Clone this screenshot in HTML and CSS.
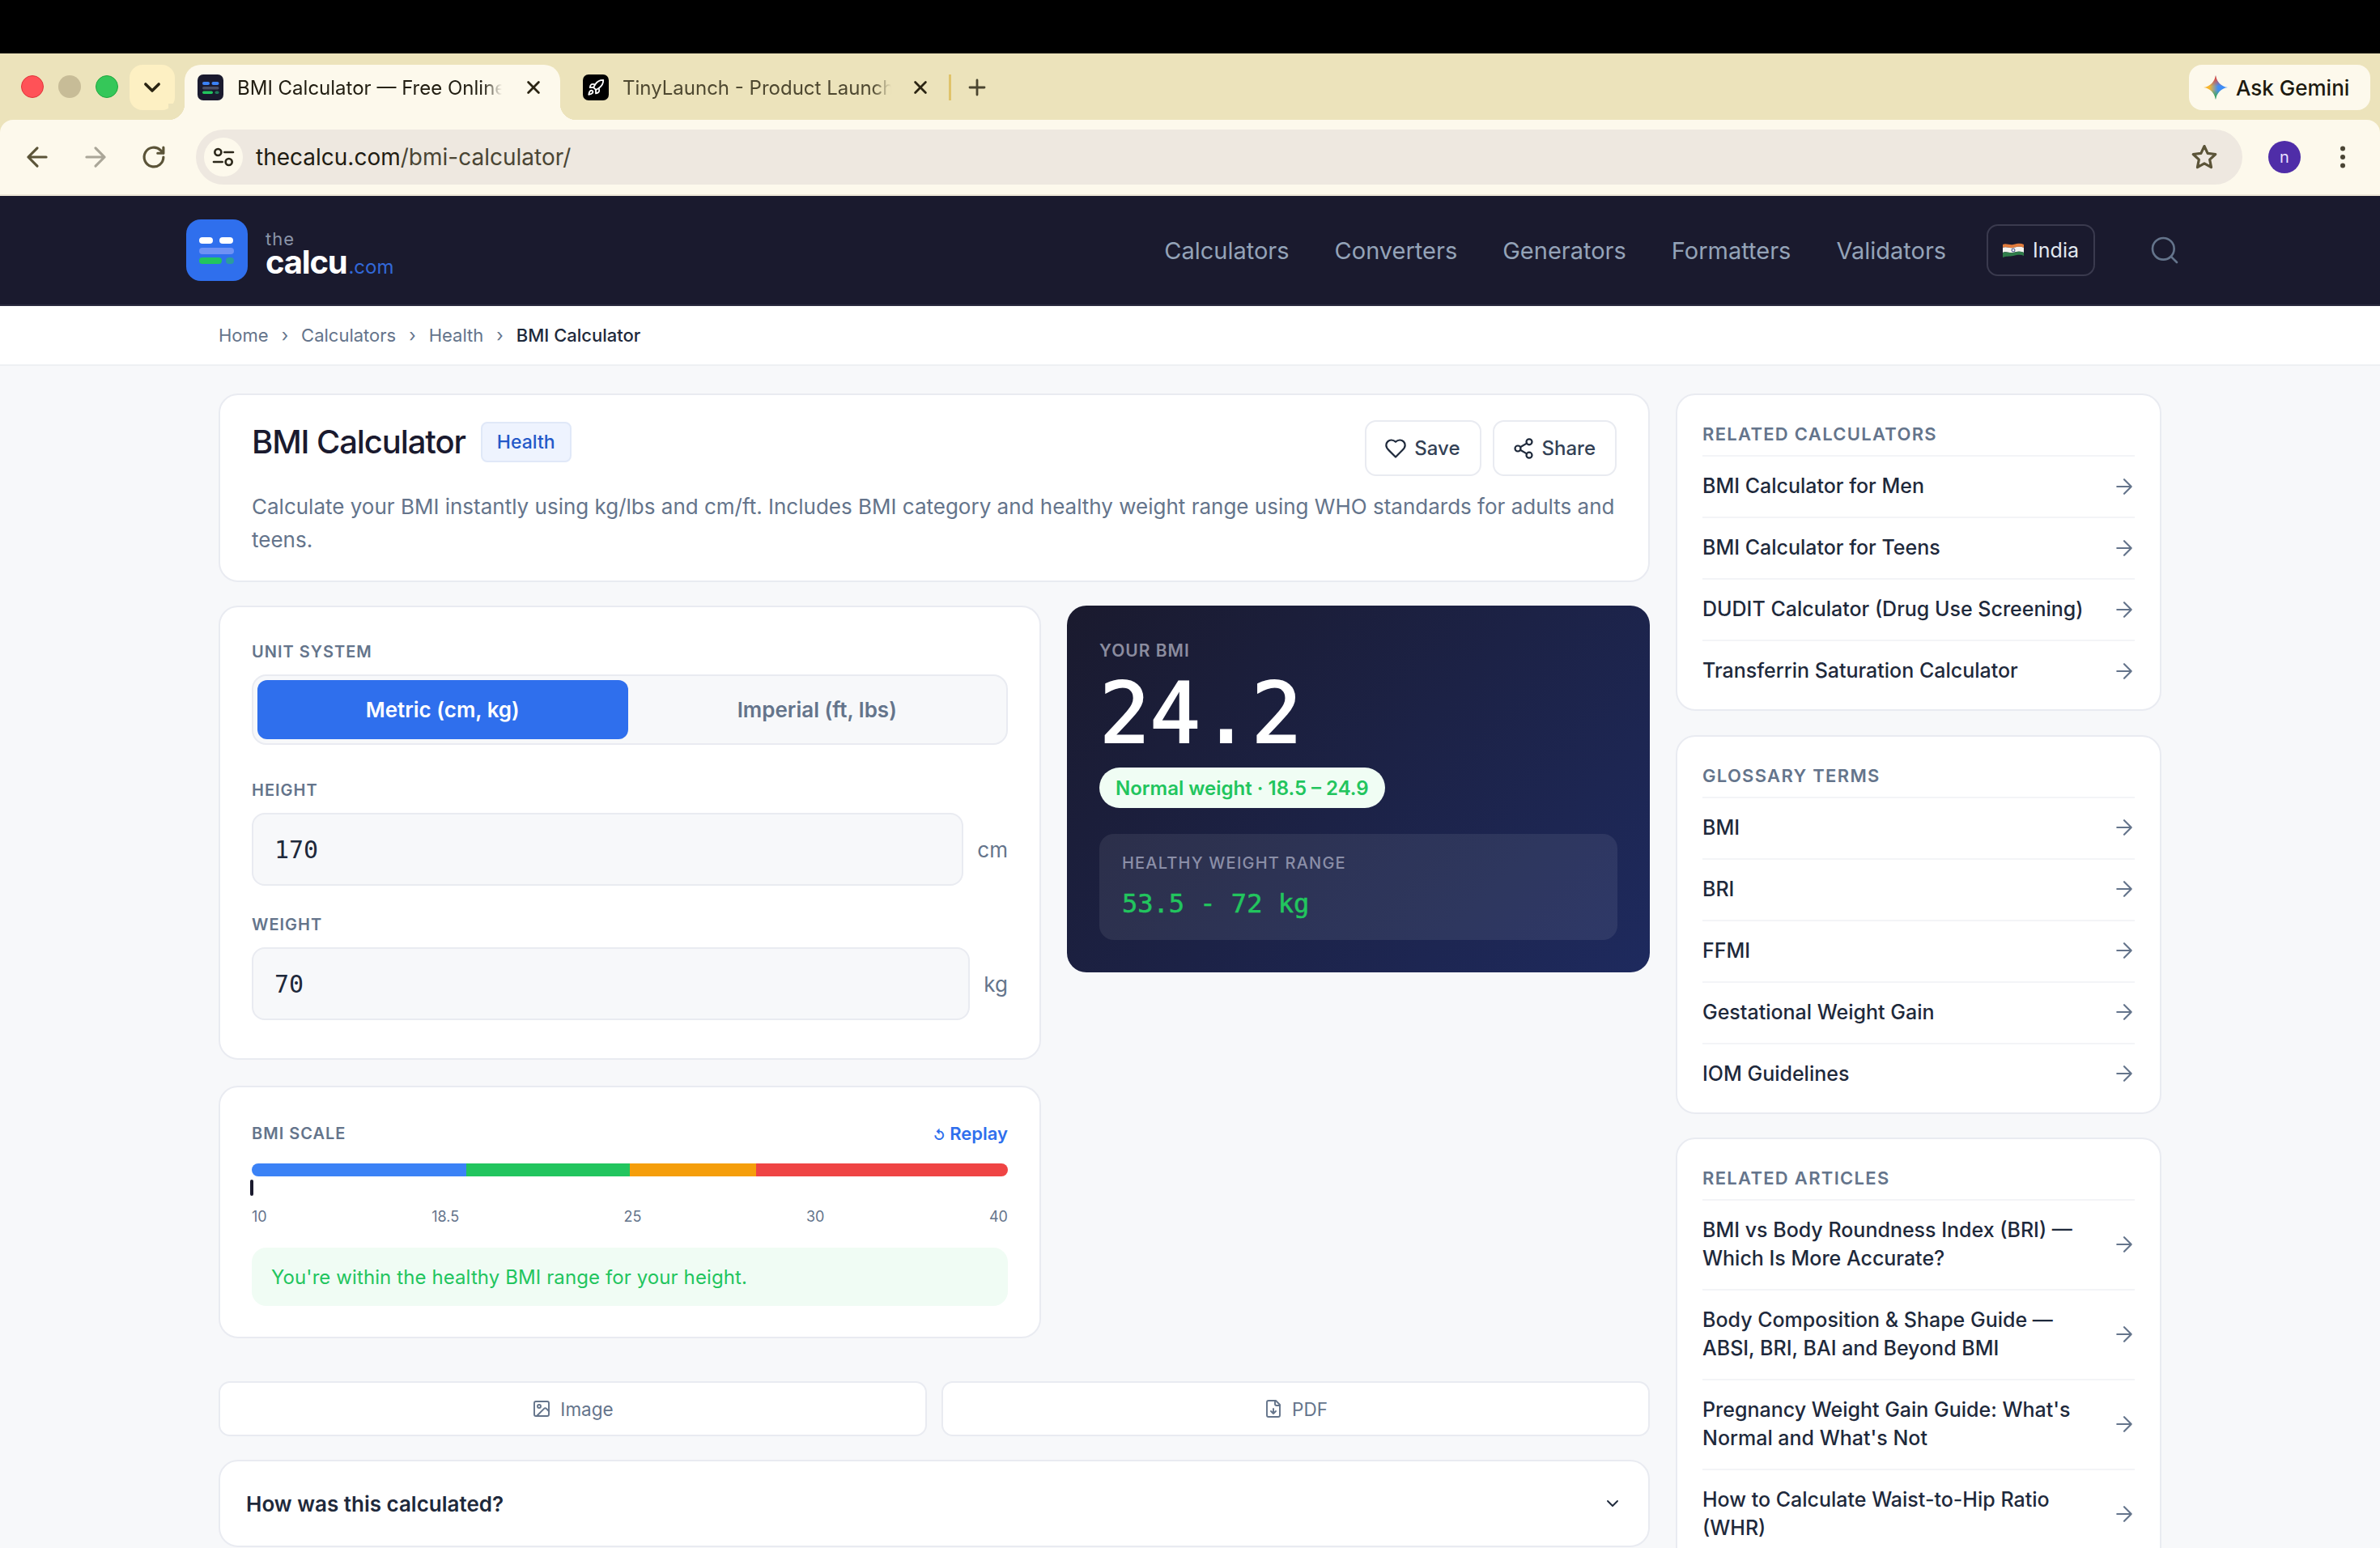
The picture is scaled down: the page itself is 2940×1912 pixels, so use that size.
FILE: index.html
```html
<!DOCTYPE html>
<html lang="en">
<head>
<meta charset="utf-8">
<title>BMI Calculator</title>
<link rel="stylesheet" href="styles.css">
</head>
<body>
<div class="topblack"></div>
<div class="chrome">
  <div class="tabstrip">
    <span class="light red"></span><span class="light gray"></span><span class="light green"></span>
    <button class="tabmenu"><svg class="ic28" viewBox="0 0 24 24"><path d="m5 8.500 7 7 7-7" class="s-dark3"/></svg></button>
    <div class="tab active">
      <svg class="fav" viewBox="0 0 32 32"><rect width="32" height="32" rx="7" fill="#1a1a2e"/><rect x="6" y="9" width="9" height="4" rx="2" fill="#3b82f6"/><rect x="17.500" y="9" width="9" height="4" rx="2" fill="#3b82f6"/><rect x="6" y="15" width="20.500" height="3.500" rx="1.700" fill="#4a4f63"/><rect x="6" y="20.500" width="13" height="3.500" rx="1.700" fill="#22c55e"/><rect x="21.500" y="20.500" width="5" height="3.500" rx="1.700" fill="#1f7a58"/></svg>
      <span class="tabtitle">BMI Calculator — Free Online</span>
      <svg class="tabx" viewBox="0 0 24 24"><path d="M5 5l14 14M19 5 5 19" class="s-dark3"/></svg>
    </div>
    <div class="tab">
      <svg class="fav" viewBox="0 0 32 32"><rect width="32" height="32" rx="7" fill="#000"/><g transform="translate(5 5) scale(.92)" fill="none" stroke="#fff" stroke-width="2" stroke-linecap="round" stroke-linejoin="round"><path d="M4.500 16.500c-1.500 1.260-2 5-2 5s3.740-.5 5-2c.71-.84.7-2.130-.09-2.910a2.180 2.180 0 0 0-2.910-.09z"/><path d="m12 15-3-3a22 22 0 0 1 2-3.950A12.880 12.880 0 0 1 22 2c0 2.720-.78 7.500-6 11a22.350 22.350 0 0 1-4 2z"/><path d="M9 12H4s.55-3.030 2-4c1.620-1.080 5 0 5 0"/><path d="M12 15v5s3.030-.55 4-2c1.080-1.620 0-5 0-5"/></g></svg>
      <span class="tabtitle dim">TinyLaunch - Product Launch</span>
      <svg class="tabx" viewBox="0 0 24 24"><path d="M5 5l14 14M19 5 5 19" class="s-dark3"/></svg>
    </div>
    <span class="tabsep"></span>
    <svg class="newtab" viewBox="0 0 24 24"><path d="M12 3v18M3 12h18" class="s-plus"/></svg>
    <div class="gemini">
      <svg class="gemstar" viewBox="0 0 32 32"><defs><linearGradient id="gemh" x1="0" y1="0" x2="1" y2="0"><stop offset=".25" stop-color="#f5b52e"/><stop offset=".6" stop-color="#3f8df5"/></linearGradient><linearGradient id="gemt" x1="0" y1="0" x2="0" y2="1"><stop offset=".1" stop-color="#ea4335"/><stop offset=".45" stop-color="#ea4335" stop-opacity="0"/></linearGradient><linearGradient id="gemb" x1="0" y1="0" x2="0" y2="1"><stop offset=".6" stop-color="#34a853" stop-opacity="0"/><stop offset=".9" stop-color="#34a853"/></linearGradient></defs><path d="M16 0c1 8 7 15 16 16-9 1-15 8-16 16-1-8-7-15-16-16 9-1 15-8 16-16z" fill="url(#gemh)"/><path d="M16 0c1 8 7 15 16 16-9 1-15 8-16 16-1-8-7-15-16-16 9-1 15-8 16-16z" fill="url(#gemt)"/><path d="M16 0c1 8 7 15 16 16-9 1-15 8-16 16-1-8-7-15-16-16 9-1 15-8 16-16z" fill="url(#gemb)"/></svg>
      <span>Ask Gemini</span>
    </div>
  </div>
  <div class="toolbar">
    <span class="navslot"><svg class="ic38" viewBox="0 0 24 24"><path d="M19 12H5m7 7-7-7 7-7" class="s-olive"/></svg></span>
    <span class="navslot"><svg class="ic38" viewBox="0 0 24 24"><path d="M5 12h14m-7-7 7 7-7 7" class="s-faint"/></svg></span>
    <span class="navslot"><svg class="ic38" viewBox="0 0 24 24"><path d="M19.500 12a7.500 7.500 0 1 1-2.200-5.300L19.500 9M19.500 4.500V9H15" class="s-olive"/></svg></span>
    <div class="urlbar">
      <span class="siteicon"><svg class="ic32" viewBox="0 0 24 24"><circle cx="7" cy="7.500" r="3" class="s-dark"/><path d="M13 7.500h8M3 16.500h8" class="s-dark"/><circle cx="17" cy="16.500" r="3" class="s-dark"/></svg></span>
      <span class="urltext"><span class="urlhost">thecalcu.com</span>/bmi-calculator/</span>
      <svg class="urlstar" viewBox="0 0 24 24"><path d="M12 3.500l2.600 5.600 6.100.7-4.500 4.200 1.200 6L12 17l-5.400 3 1.200-6-4.500-4.200 6.100-.7z" class="s-olive"/></svg>
    </div>
    <span class="avatar">n</span>
    <svg class="kebab" viewBox="0 0 24 24"><circle cx="12" cy="5" r="2" fill="#4a4534"/><circle cx="12" cy="12" r="2" fill="#4a4534"/><circle cx="12" cy="19" r="2" fill="#4a4534"/></svg>
  </div>
</div>

<header class="siteheader">
  <a class="logo">
    <svg class="logomark" viewBox="0 0 76 76"><rect width="76" height="76" rx="18" fill="#2f6fed"/><rect x="16" y="22" width="17" height="8" rx="4" fill="#fff"/><rect x="41" y="22" width="17" height="8" rx="4" fill="#fff"/><rect x="16" y="35" width="43" height="8" rx="4" fill="#6e92f5"/><rect x="16" y="47" width="28" height="8" rx="4" fill="#22c55e"/><rect x="49" y="47" width="10" height="8" rx="4" fill="#2a9d9d"/></svg>
    <span class="logotext"><span class="logothe">the</span><span class="logomain">calcu<span class="logocom">.com</span></span></span>
  </a>
  <nav class="mainnav">
    <a>Calculators</a><a>Converters</a><a>Generators</a><a>Formatters</a><a>Validators</a>
  </nav>
  <div class="country">
    <svg class="flag" viewBox="0 0 26 18"><path d="M0 2c4-2 8 1 13 0s9-2 13 0v4c-4-2-8-1-13 0S4 4 0 6z" fill="#e07b3c"/><path d="M0 6c4-2 8 1 13 0s9-2 13 0v6c-4-2-8-1-13 0S4 10 0 12z" fill="#f4f4f0"/><path d="M0 12c4-2 8 1 13 0s9-2 13 0v4c-4-2-8-1-13 0S4 16 0 18z" fill="#2f7d4a"/><circle cx="13" cy="9" r="2" fill="none" stroke="#2a3a7c" stroke-width=".9"/></svg>
    <span>India</span>
  </div>
  <svg class="searchic" viewBox="0 0 24 24"><circle cx="11" cy="11" r="8" class="s-search"/><path d="m21 21-4.300-4.300" class="s-search"/></svg>
</header>

<div class="crumbs">
  <div class="crumbrow">
    <a>Home</a><span>›</span><a>Calculators</a><span>›</span><a>Health</a><span>›</span><b>BMI Calculator</b>
  </div>
</div>

<main class="page">
  <div class="maincol">
    <section class="card headcard">
      <div class="headrow">
        <div class="titlewrap"><h1>BMI Calculator</h1><span class="badge">Health</span></div>
        <div class="headbtns">
          <button class="btn"><svg class="ic28" viewBox="0 0 24 24"><path d="M19 14c1.490-1.460 3-3.210 3-5.500A5.500 5.500 0 0 0 16.500 3c-1.760 0-3 .5-4.500 2-1.500-1.500-2.740-2-4.500-2A5.500 5.500 0 0 0 2 8.500c0 2.300 1.500 4.050 3 5.500l7 7Z" class="s-slate"/></svg>Save</button>
          <button class="btn"><svg class="ic28" viewBox="0 0 24 24"><circle cx="18" cy="5" r="3" class="s-slate"/><circle cx="6" cy="12" r="3" class="s-slate"/><circle cx="18" cy="19" r="3" class="s-slate"/><path d="m8.590 13.510 6.830 3.980M15.410 6.510l-6.820 3.980" class="s-slate"/></svg>Share</button>
        </div>
      </div>
      <p class="desc">Calculate your BMI instantly using kg/lbs and cm/ft. Includes BMI category and healthy weight range using WHO standards for adults and teens.</p>
    </section>

    <div class="calcgrid">
      <section class="card inputcard">
        <div class="lab">UNIT SYSTEM</div>
        <div class="segment"><button class="seg on">Metric (cm, kg)</button><button class="seg">Imperial (ft, lbs)</button></div>
        <div class="lab lab2">HEIGHT</div>
        <div class="field"><input class="numinput" value="170"><span class="unit">cm</span></div>
        <div class="lab lab3">WEIGHT</div>
        <div class="field"><input class="numinput" value="70"><span class="unit">kg</span></div>
      </section>
      <section class="result">
        <div class="reslabel">YOUR BMI</div>
        <div class="resvalue">24.2</div>
        <span class="pill">Normal weight · 18.5 – 24.9</span>
        <div class="rangebox">
          <div class="rangelabel">HEALTHY WEIGHT RANGE</div>
          <div class="rangevalue">53.5 - 72 kg</div>
        </div>
      </section>
    </div>

    <section class="card scalecard">
      <div class="scalehead"><div class="lab">BMI SCALE</div><a class="replay"><span class="replayglyph">↺</span> Replay</a></div>
      <div class="bar">
        <span class="bl" style="width:28.33%"></span><span class="gr" style="width:21.67%"></span><span class="or" style="width:16.67%"></span><span class="re" style="width:33.33%"></span>
      </div>
      <span class="marker"></span>
      <div class="ticks"><span>10</span><span>18.5</span><span>25</span><span>30</span><span>40</span></div>
      <div class="note">You're within the healthy BMI range for your height.</div>
    </section>

    <div class="exports">
      <button class="expbtn"><svg class="ic24" viewBox="0 0 24 24"><rect x="3" y="3" width="18" height="18" rx="2" class="s-gray"/><circle cx="9" cy="9" r="2" class="s-gray"/><path d="m21 15-3.086-3.086a2 2 0 0 0-2.828 0L6 21" class="s-gray"/></svg>Image</button>
      <button class="expbtn"><svg class="ic24" viewBox="0 0 24 24"><path d="M15 2H6a2 2 0 0 0-2 2v16a2 2 0 0 0 2 2h12a2 2 0 0 0 2-2V7Z" class="s-gray"/><path d="M14 2v4a2 2 0 0 0 2 2h4M12 18v-6m-3 3 3 3 3-3" class="s-gray"/></svg>PDF</button>
    </div>

    <section class="card howcard"><span>How was this calculated?</span><svg class="ic24" viewBox="0 0 24 24"><path d="m6 9 6 6 6-6" class="s-slate"/></svg></section>
  </div>

  <aside class="sidebar">
    <section class="card sidecard">
      <h2>RELATED CALCULATORS</h2>
      <a class="row"><span>BMI Calculator for Men</span><svg class="arrow" viewBox="0 0 24 24"><path d="M5 12h14m-7-7 7 7-7 7"/></svg></a>
      <a class="row"><span>BMI Calculator for Teens</span><svg class="arrow" viewBox="0 0 24 24"><path d="M5 12h14m-7-7 7 7-7 7"/></svg></a>
      <a class="row"><span>DUDIT Calculator (Drug Use Screening)</span><svg class="arrow" viewBox="0 0 24 24"><path d="M5 12h14m-7-7 7 7-7 7"/></svg></a>
      <a class="row"><span>Transferrin Saturation Calculator</span><svg class="arrow" viewBox="0 0 24 24"><path d="M5 12h14m-7-7 7 7-7 7"/></svg></a>
    </section>
    <section class="card sidecard">
      <h2>GLOSSARY TERMS</h2>
      <a class="row"><span>BMI</span><svg class="arrow" viewBox="0 0 24 24"><path d="M5 12h14m-7-7 7 7-7 7"/></svg></a>
      <a class="row"><span>BRI</span><svg class="arrow" viewBox="0 0 24 24"><path d="M5 12h14m-7-7 7 7-7 7"/></svg></a>
      <a class="row"><span>FFMI</span><svg class="arrow" viewBox="0 0 24 24"><path d="M5 12h14m-7-7 7 7-7 7"/></svg></a>
      <a class="row"><span>Gestational Weight Gain</span><svg class="arrow" viewBox="0 0 24 24"><path d="M5 12h14m-7-7 7 7-7 7"/></svg></a>
      <a class="row"><span>IOM Guidelines</span><svg class="arrow" viewBox="0 0 24 24"><path d="M5 12h14m-7-7 7 7-7 7"/></svg></a>
    </section>
    <section class="card sidecard">
      <h2>RELATED ARTICLES</h2>
      <a class="row"><span>BMI vs Body Roundness Index (BRI) —<br>Which Is More Accurate?</span><svg class="arrow" viewBox="0 0 24 24"><path d="M5 12h14m-7-7 7 7-7 7"/></svg></a>
      <a class="row"><span>Body Composition &amp; Shape Guide —<br>ABSI, BRI, BAI and Beyond BMI</span><svg class="arrow" viewBox="0 0 24 24"><path d="M5 12h14m-7-7 7 7-7 7"/></svg></a>
      <a class="row"><span>Pregnancy Weight Gain Guide: What's<br>Normal and What's Not</span><svg class="arrow" viewBox="0 0 24 24"><path d="M5 12h14m-7-7 7 7-7 7"/></svg></a>
      <a class="row"><span>How to Calculate Waist-to-Hip Ratio<br>(WHR)</span><svg class="arrow" viewBox="0 0 24 24"><path d="M5 12h14m-7-7 7 7-7 7"/></svg></a>
    </section>
  </aside>
</main>
</body>
</html>
```
FILE: styles.css
```css
* { box-sizing: border-box; }
html, body { margin: 0; padding: 0; }
body { width: 2940px; height: 1912px; overflow: hidden; background: #f7f8fa; font-family: Inter, "Liberation Sans", sans-serif; color: #1e293b; }
button { font-family: inherit; cursor: pointer; }
svg { display: block; flex: none; }
.s-dark3, .s-olive, .s-faint, .s-dark, .s-search, .s-slate, .s-gray, .s-plus { fill: none; stroke-linecap: round; stroke-linejoin: round; stroke-width: 2; }
.s-dark3 { stroke: #2a2412; stroke-width: 3; }
.s-olive { stroke: #5b5438; stroke-width: 2; }
.s-plus { stroke: #4a4530; stroke-width: 2.800; }
.s-faint { stroke: #aaa698; stroke-width: 2; }
.s-dark { stroke: #2c281a; stroke-width: 2; }
.s-search { stroke: #64748b; stroke-width: 1.600; }
.s-slate { stroke: #1e293b; stroke-width: 1.900; }
.s-gray { stroke: #64748b; stroke-width: 1.900; }
.ic24 { width: 24px; height: 24px; }
.ic28 { width: 28px; height: 28px; }
.ic32 { width: 32px; height: 32px; }
.ic38 { width: 38px; height: 38px; }

.topblack { height: 66px; background: #000; }
.chrome { background: #ece3bb; }
.tabstrip { height: 82px; padding: 14px 12px 0 26px; display: flex; align-items: flex-start; }
.light { width: 28px; height: 28px; border-radius: 50%; margin: 13px 18px 0 0; flex: none; }
.light.red { background: #ff5257; border: 1px solid #e0343a; }
.light.gray { background: #c7bc97; }
.light.green { background: #35c759; border: 1px solid #20a83f; margin-right: 14px; }
.tabmenu { width: 56px; height: 56px; border: 0; border-radius: 16px; background: #fdf0c3; display: flex; align-items: center; justify-content: center; padding: 0; margin-right: 12px; flex: none; }
.tab { width: 464px; height: 68px; padding: 12px 22px 0 16px; display: flex; align-items: flex-start; flex: none; position: relative; border-radius: 20px 20px 0 0; }
.tab.active { background: #fdf9ec; }
.tab.active::before, .tab.active::after { content: ""; position: absolute; bottom: 0; width: 20px; height: 20px; }
.tab.active::before { left: -20px; background: radial-gradient(circle at 0 0, #ece3bb 20px, #fdf9ec 20.500px); }
.tab.active::after { right: -20px; background: radial-gradient(circle at 100% 0, #ece3bb 20px, #fdf9ec 20.500px); }
.tab + .tab { margin-left: 16px; padding-left: 12px; width: 462px; }
.fav { width: 32px; height: 32px; margin-right: 17px; }
.tabtitle { flex: 1; min-width: 0; height: 34px; line-height: 34px; font-size: 24px; color: #201c10; white-space: nowrap; -webkit-mask-image: linear-gradient(90deg, #000 93%, transparent 100%); mask-image: linear-gradient(90deg, #000 93%, transparent 100%); }
.tab.active .tabtitle { flex: 0 0 327px; }
.tab + .tab .tabtitle { flex: 0 0 332px; }
.tabtitle.dim { color: #4e4830; }
.tabx { width: 22px; height: 22px; margin: 5px 0 0 auto; }
.tabsep { width: 3px; height: 32px; margin: 12px 0 0 2px; background: #e0c36a; flex: none; }
.newtab { width: 24px; height: 24px; margin: 16px 0 0 20px; }
.gemini { margin-left: auto; width: 224px; height: 56px; background: #fdf9ec; border-radius: 16px; display: flex; align-items: center; padding-left: 18px; gap: 10px; font-size: 26px; font-weight: 500; color: #1c1a10; white-space: nowrap; }
.gemstar { width: 30px; height: 32px; }

.toolbar { height: 94px; background: #fdf9ec; border-bottom: 2px solid #ece6d6; border-radius: 16px 16px 0 0; display: flex; align-items: center; padding: 0 28px 0 10px; }
.navslot { width: 72px; display: flex; justify-content: center; flex: none; }
.urlbar { flex: 1; height: 68px; margin-left: 16px; border-radius: 34px; background: #eee8e0; display: flex; align-items: center; padding: 0 28px 0 10px; }
.siteicon { width: 48px; height: 48px; border-radius: 50%; background: #fdf9ec; display: flex; align-items: center; justify-content: center; flex: none; }
.urltext { margin-left: 16px; font-size: 28px; color: #4a4534; flex: 1; }
.urlhost { color: #1f1c12; }
.urlstar { width: 38px; height: 38px; }
.avatar { width: 40px; height: 40px; margin-left: 32px; border-radius: 50%; background: #4f2da8; color: #e8e0ff; font-size: 20px; display: flex; align-items: center; justify-content: center; flex: none; }
.kebab { width: 36px; height: 36px; margin-left: 34px; }

.siteheader { height: 136px; background: #1a1a2e; border-bottom: 2px solid #2b2b3f; padding: 0 246px 0 230px; display: flex; align-items: center; }
.logo { display: flex; align-items: center; gap: 22px; }
.logomark { width: 76px; height: 76px; }
.logotext { display: flex; flex-direction: column; margin-top: 14px; }
.logothe { font-size: 22px; line-height: 22px; color: #8a94a8; letter-spacing: 1px; }
.logomain { font-size: 40px; line-height: 36px; font-weight: 700; color: #fff; letter-spacing: -1.200px; }
.logocom { margin-left: 2px; font-size: 24px; font-weight: 400; color: #3268d8; letter-spacing: 0; }
.mainnav { margin-left: auto; display: flex; gap: 56px; font-size: 29px; color: #94a3b8; }
.country { margin-left: 50px; height: 64px; padding: 0 18px; border: 2px solid #3a3a4e; border-radius: 14px; display: flex; align-items: center; gap: 11px; font-size: 25px; color: #e2e8f0; }
.flag { width: 26px; height: 18px; }
.searchic { width: 40px; height: 40px; margin-left: 66px; }

.crumbs { height: 74px; background: #fff; border-bottom: 2px solid #eef0f3; }
.crumbrow { width: 2400px; margin: 0 auto; height: 72px; display: flex; align-items: center; gap: 16px; font-size: 22px; color: #64748b; }
.crumbrow b { font-weight: 500; color: #1e293b; }

.page { width: 2400px; margin: 0 auto; padding-top: 34px; display: grid; grid-template-columns: 1768px 600px; gap: 32px; align-items: start; }
.maincol { min-width: 0; }
.card { background: #fff; border: 2px solid #e9ebf1; border-radius: 24px; }

.headcard { height: 233px; padding: 31px 39px 0; }
.headrow { display: flex; justify-content: space-between; align-items: flex-start; }
.titlewrap { display: flex; align-items: center; gap: 19px; height: 52px; }
h1 { margin: 0; font-size: 40px; font-weight: 500; letter-spacing: -1.100px; color: #1a1a2e; white-space: nowrap; }
.badge { height: 50px; margin-top: 2px; padding: 0 18px; display: flex; align-items: center; background: #eef3fe; border: 2px solid #e0e8f8; border-radius: 8px; font-size: 23px; font-weight: 500; color: #2358c8; }
.headbtns { display: flex; gap: 14px; }
.btn { height: 69px; padding: 0 24px 0 22px; background: #fff; border: 2px solid #e9ebf1; border-radius: 14px; display: flex; align-items: center; gap: 9px; font-size: 24px; font-weight: 500; color: #334155; }
.desc { margin: 17px 0 0; font-size: 26px; line-height: 41px; color: #64748b; }

.calcgrid { margin-top: 29px; display: grid; grid-template-columns: 1016px 720px; gap: 32px; align-items: start; }
.inputcard { height: 561px; padding: 40px 39px 0; }
.lab { font-size: 20px; font-weight: 600; line-height: 30px; letter-spacing: 1px; color: #64748b; }
.segment { height: 87px; margin-top: 13px; padding: 5px; background: #f7f8fa; border: 2px solid #e9ebf1; border-radius: 18px; display: flex; gap: 5px; }
.seg { flex: 1; border: 0; background: transparent; border-radius: 12px; font-size: 26px; font-weight: 600; color: #64748b; }
.seg.on { background: #2f6fed; color: #fff; }
.lab2 { margin-top: 41px; }
.lab3 { margin-top: 33px; }
.field { margin-top: 13px; display: flex; align-items: center; gap: 17px; }
.numinput { flex: 1; min-width: 0; height: 90px; padding: 0 26px; background: #f7f8fa; border: 2px solid #e9ebf1; border-radius: 16px; font-family: "DejaVu Sans Mono", "Liberation Mono", monospace; font-size: 30px; color: #1e293b; outline: none; }
.unit { font-size: 26px; color: #64748b; }

.result { height: 453px; padding: 40px; border-radius: 24px; background: linear-gradient(135deg, #1a1a2e 0%, #1e2a5e 100%); }
.reslabel { margin-top: 1px; font-size: 21px; font-weight: 600; line-height: 30px; letter-spacing: 1px; color: #8b8c9f; }
.resvalue { margin-top: 11px; height: 103px; font-family: "DejaVu Sans Mono", monospace; font-size: 104px; line-height: 103px; color: #fff; -webkit-text-stroke: 2px #fff; }
.pill { display: inline-flex; align-items: center; height: 50px; margin-top: 15px; padding: 0 20px; background: #f0fdf4; border-radius: 25px; font-size: 24px; font-weight: 600; color: #22c55e; white-space: nowrap; }
.rangebox { height: 131px; margin-top: 32px; padding: 21px 28px 0; background: rgba(255,255,255,.08); border-radius: 18px; }
.rangelabel { font-size: 20px; font-weight: 500; line-height: 30px; letter-spacing: 1.200px; color: #8b8fa8; }
.rangevalue { margin-top: 15px; font-family: "DejaVu Sans Mono", monospace; font-size: 32px; line-height: 40px; color: #22c55e; -webkit-text-stroke: .6px #22c55e; }

.scalecard { height: 312px; margin-top: 32px; width: 1016px; padding: 42px 39px 0; }
.scalehead { display: flex; justify-content: space-between; align-items: center; height: 30px; }
.replay { font-size: 22px; font-weight: 600; color: #2f6fed; }
.replayglyph { font-size: 16px; font-weight: 700; }
.bar { margin-top: 22px; height: 16px; border-radius: 8px; overflow: hidden; display: flex; }
.bar span { display: block; height: 100%; }
.bl { background: #3b82f6; }
.gr { background: #22c55e; }
.or { background: #f59e0b; }
.re { background: #ef4444; }
.marker { display: block; width: 4px; height: 20px; margin: 4px 0 0 -2px; border-radius: 2px; background: #1a1a2e; }
.ticks { margin-top: 15px; display: flex; justify-content: space-between; font-size: 18px; line-height: 22px; color: #64748b; }
.note { margin-top: 27px; height: 72px; padding-left: 24px; display: flex; align-items: center; background: #f0fcf4; border-radius: 18px; font-size: 24px; letter-spacing: .1px; color: #22c55e; }

.exports { margin-top: 53px; display: grid; grid-template-columns: 1fr 1fr; gap: 18px; }
.expbtn { height: 68px; background: #fff; border: 2px solid #e9ebf1; border-radius: 14px; display: flex; align-items: center; justify-content: center; gap: 11px; font-size: 22.500px; color: #64748b; }
.howcard { height: 108px; margin-top: 29px; padding: 0 32px; display: flex; align-items: center; justify-content: space-between; font-size: 26px; font-weight: 600; color: #1e293b; }

.sidebar { display: flex; flex-direction: column; gap: 29.500px; min-width: 0; }
.sidecard { padding: 30px 31px 30px; }
h2 { margin: 0 0 8px; font-size: 22px; font-weight: 600; line-height: 36px; letter-spacing: 1.300px; color: #64748b; }
.row { padding: 19px 0 20px; border-top: 2px solid #f3f4f7; display: flex; align-items: center; justify-content: space-between; font-size: 25px; line-height: 35px; font-weight: 500; color: #1e293b; }
.row:last-child { padding-bottom: 0; }
.arrow { width: 30px; height: 30px; margin-right: -2px; fill: none; stroke: #64748b; stroke-width: 1.700; stroke-linecap: round; stroke-linejoin: round; }
```
